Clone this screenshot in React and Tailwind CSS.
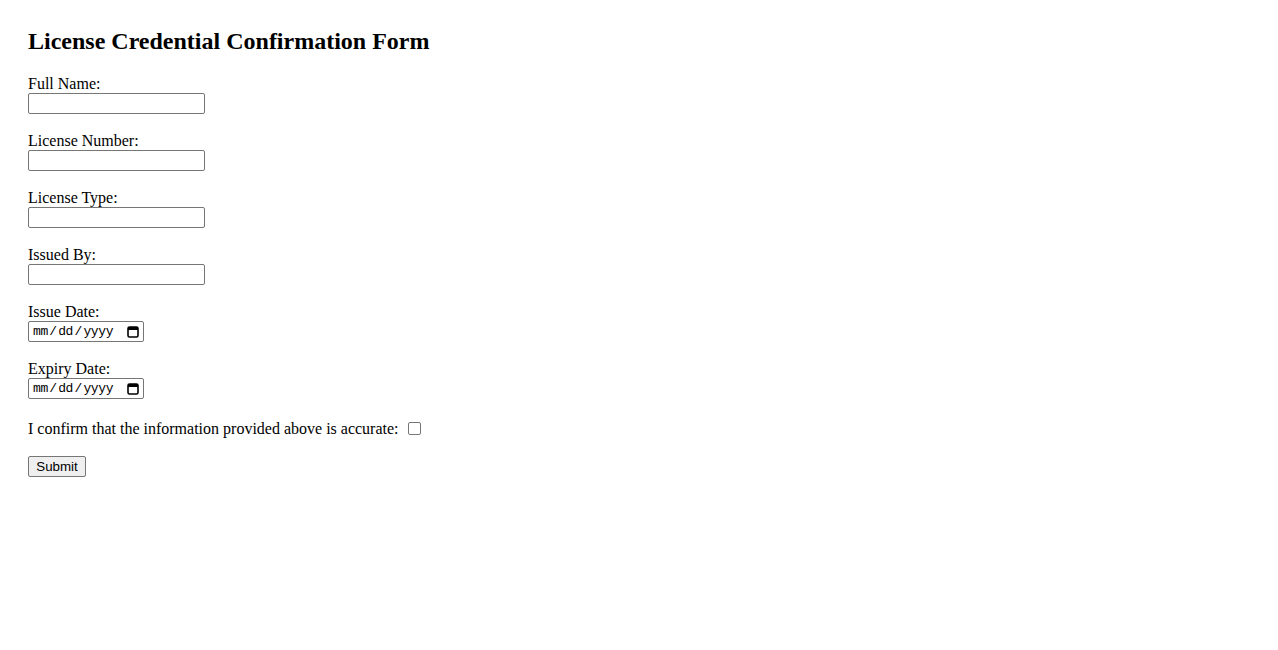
import React from "react";

const serif = { fontFamily: '"Liberation Serif", "Times New Roman", serif' };

function Field({ label, type = "text" }) {
  const isDate = type === "date";
  return (
    <div className="flex flex-col items-start mb-[18px]">
      <label className="text-[16px] leading-[18px] text-black">{label}</label>
      {isDate ? (
        <div className="flex items-center justify-between w-[116px] h-[21px] border border-[#767676] rounded-[2px] bg-white pl-[4px] pr-[4px]">
          <span className="flex items-center font-['Liberation_Mono',monospace] text-[13px] leading-[19px] text-black tracking-[-0.4px]">
            <span>mm</span>
            <span className="px-[1.5px]">/</span>
            <span>dd</span>
            <span className="px-[1.5px]">/</span>
            <span>yyyy</span>
          </span>
          <svg width="12" height="13" viewBox="0 0 12 13" className="block">
            <rect x="1" y="2" width="10" height="10" rx="1.5" fill="none" stroke="#000" strokeWidth="1.6" />
            <rect x="1" y="2" width="10" height="3" fill="#000" />
          </svg>
        </div>
      ) : (
        <input
          type="text"
          className="block w-[177px] h-[21px] border border-[#767676] rounded-[2px] bg-white px-[2px] text-[13.33px] outline-none"
        />
      )}
    </div>
  );
}

export default function App() {
  return (
    <div className="min-h-[650px] bg-white text-black pl-[28px] pt-[28px]" style={serif}>
      <h2 className="text-[24px] leading-[27px] font-bold m-0">License Credential Confirmation Form</h2>
      <form className="mt-[20px]" onSubmit={(e) => e.preventDefault()}>
        <Field label="Full Name:" />
        <Field label="License Number:" />
        <Field label="License Type:" />
        <Field label="Issued By:" />
        <Field label="Issue Date:" type="date" />
        <Field label="Expiry Date:" type="date" />
        <div className="flex items-start h-[20px] mb-[19px]">
          <span className="mt-[3px] text-[16px] leading-[18px]">
            I confirm that the information provided above is accurate:
          </span>
          <span className="ml-[9px] mt-[5px] inline-block w-[13px] h-[13px] border border-[#767676] rounded-[2px] bg-white" />
        </div>
        <button
          type="submit"
          className="block w-[58px] h-[21px] border border-[#767676] rounded-[2px] bg-[#efefef] text-[13.33px] leading-[19px] text-black"
          style={{ fontFamily: '"Liberation Sans", Arial, sans-serif' }}
        >
          Submit
        </button>
      </form>
    </div>
  );
}
